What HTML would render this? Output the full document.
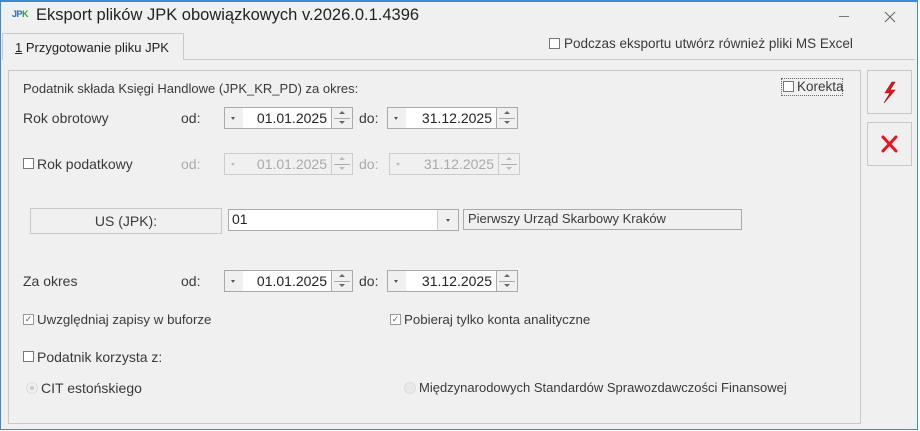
<!DOCTYPE html>
<html><head><style>
*{box-sizing:border-box;margin:0;padding:0}
body{width:920px;height:431px;background:#fff;position:relative;overflow:hidden;font-family:"Liberation Sans",Tahoma,sans-serif;font-size:13px;color:#3a3a3a}
.a{position:absolute}
.win{left:0;top:0;width:918px;height:430px;background:#f0f0f0;border:1px solid #3a8ad6;border-top:2px solid #3a8ad6}
.t{white-space:nowrap}
.cb{position:absolute;width:11px;height:11px;border:1px solid #777;background:#fff}
.dd{position:absolute;height:22px;border:1px solid #aaa;background:#f0f0f0}
.inp{position:absolute;height:22px;background:#fff;border-top:1px solid #aaa;border-bottom:1px solid #aaa;text-align:right;padding-right:4px;line-height:20px;font-size:14px;color:#222}
.dis{color:#aaa}
.dis .inp{background:#f0f0f0;color:#aaa;border-color:#ccc}
.dis .dd{border-color:#ccc}
.tri{position:absolute;left:6px;top:9px;width:0;height:0;border-left:2.5px solid transparent;border-right:2.5px solid transparent;border-top:3px solid #555}
.sp{position:absolute;width:22px;height:22px;border:1px solid #aaa;background:#f0f0f0}
.sp:before{content:"";position:absolute;left:7px;top:3px;border-left:3px solid transparent;border-right:3px solid transparent;border-bottom:3px solid #666}
.sp:after{content:"";position:absolute;left:7px;top:13px;border-left:3px solid transparent;border-right:3px solid transparent;border-top:3px solid #666}
.sp i{position:absolute;left:2px;right:2px;top:10px;border-top:1px solid #aaa}
.dis .sp{border-color:#ccc}
.dis .sp:before{border-bottom-color:#bbb}.dis .sp:after{border-top-color:#bbb}
.btn{position:absolute;border:1px solid #c8c8c8;background:#f0f0f0}
</style></head><body>
<div class="a win"></div>
<div class="a t" style="left:12px;top:9px;font-size:9px;font-weight:bold;color:#2a6db5;letter-spacing:-0.5px">JP<span style="color:#3a9a3a">K</span></div>
<div class="a t" style="left:36px;top:6px;font-size:16.5px;color:#222">Eksport plików JPK obowiązkowych v.2026.0.1.4396</div>
<div class="a" style="left:839px;top:16px;width:10px;border-top:1px solid #777"></div>
<svg class="a" style="left:884px;top:11px" width="12" height="12"><path d="M1 1L11 11M11 1L1 11" stroke="#666" stroke-width="1.1"/></svg>
<!-- tab -->
<div class="a" style="left:2px;top:59px;width:913px;border-top:1px solid #c8c8c8"></div>
<div class="a" style="left:2px;top:33px;width:182px;height:27px;border:1px solid #c8c8c8;border-bottom:none;background:#f0f0f0"></div>
<div class="a t" style="left:15px;top:40px;color:#222"><u>1</u> Przygotowanie pliku JPK</div>
<div class="cb" style="left:549px;top:38px"></div>
<div class="a t" style="left:564px;top:36px;font-size:13.5px">Podczas eksportu utwórz również pliki MS Excel</div>
<!-- panel -->
<div class="a" style="left:8px;top:70px;width:853px;height:354px;border:1px solid #c8c8c8"></div>
<div class="a t" style="left:23px;top:81px">Podatnik składa Księgi Handlowe (JPK_KR_PD) za okres:</div>
<div class="a" style="left:781px;top:78px;width:62px;height:18px;border:1px dotted #666"></div>
<div class="cb" style="left:783px;top:81px"></div>
<div class="a t" style="left:797px;top:79px;font-size:13.5px">Korekta</div>
<!-- rows -->
<div class="a t" style="left:23px;top:110px;font-size:14px">Rok obrotowy</div>
<div class="a t" style="left:181px;top:110px;font-size:14px">od:</div>
<div class="dd" style="left:224px;top:107px;width:20px"><span class="tri"></span></div>
<div class="inp" style="left:243px;top:107px;width:88px">01.01.2025</div>
<div class="sp" style="left:331px;top:107px"><i></i></div>
<div class="a t" style="left:359px;top:110px;font-size:14px">do:</div>
<div class="dd" style="left:387px;top:107px;width:20px"><span class="tri"></span></div>
<div class="inp" style="left:406px;top:107px;width:90px">31.12.2025</div>
<div class="sp" style="left:496px;top:107px"><i></i></div>

<div class="cb" style="left:23px;top:158px"></div>
<div class="a t" style="left:37px;top:156px;font-size:14px">Rok podatkowy</div>
<div class="dis">
<div class="a t" style="left:181px;top:156px;font-size:14px">od:</div>
<div class="dd" style="left:224px;top:153px;width:20px"><span class="tri" style="border-top-color:#bbb"></span></div>
<div class="inp" style="left:243px;top:153px;width:88px">01.01.2025</div>
<div class="sp" style="left:331px;top:153px"><i></i></div>
<div class="a t" style="left:359px;top:156px;font-size:14px">do:</div>
<div class="dd" style="left:389px;top:153px;width:20px"><span class="tri" style="border-top-color:#bbb"></span></div>
<div class="inp" style="left:408px;top:153px;width:90px">31.12.2025</div>
<div class="sp" style="left:498px;top:153px"><i></i></div>
</div>

<div class="btn" style="left:30px;top:208px;width:192px;height:26px;text-align:center;line-height:24px;font-size:14px">US (JPK):</div>
<div class="a" style="left:228px;top:209px;width:231px;height:22px;border:1px solid #aaa;background:#fff"></div>
<div class="a t" style="left:232px;top:211px;font-size:14px;color:#222">01</div>
<div class="a" style="left:437px;top:210px;width:21px;height:20px;border-left:1px solid #ccc;background:#f0f0f0"><span class="tri" style="left:8px"></span></div>
<div class="a" style="left:463px;top:209px;width:279px;height:21px;border:1px solid #aaa;background:#f0f0f0"></div>
<div class="a t" style="left:468px;top:211px">Pierwszy Urząd Skarbowy Kraków</div>

<div class="a t" style="left:23px;top:273px;font-size:14px">Za okres</div>
<div class="a t" style="left:181px;top:273px;font-size:14px">od:</div>
<div class="dd" style="left:224px;top:270px;width:20px"><span class="tri"></span></div>
<div class="inp" style="left:243px;top:270px;width:88px">01.01.2025</div>
<div class="sp" style="left:331px;top:270px"><i></i></div>
<div class="a t" style="left:359px;top:273px;font-size:14px">do:</div>
<div class="dd" style="left:387px;top:270px;width:20px"><span class="tri"></span></div>
<div class="inp" style="left:406px;top:270px;width:90px">31.12.2025</div>
<div class="sp" style="left:496px;top:270px"><i></i></div>

<div class="cb" style="left:23px;top:314px;border-color:#999;font-size:9px;line-height:9px;color:#666;text-align:center">✓</div>
<div class="a t" style="left:37px;top:312px;font-size:13.3px">Uwzględniaj zapisy w buforze</div>
<div class="cb" style="left:390px;top:314px;border-color:#999;font-size:9px;line-height:9px;color:#666;text-align:center">✓</div>
<div class="a t" style="left:404px;top:312px;font-size:13.3px">Pobieraj tylko konta analityczne</div>

<div class="cb" style="left:23px;top:351px"></div>
<div class="a t" style="left:37px;top:349px;font-size:14px">Podatnik korzysta z:</div>

<div class="a" style="left:26px;top:382px;width:12px;height:12px;border-radius:50%;border:1px solid #ddd;background:#eee"><div class="a" style="left:3px;top:3px;width:4px;height:4px;border-radius:50%;background:#ccc"></div></div>
<div class="a t" style="left:41px;top:380px;font-size:14px">CIT estoński­ego</div>
<div class="a" style="left:404px;top:382px;width:12px;height:12px;border-radius:50%;border:1px solid #ddd;background:#e8e8e8"></div>
<div class="a t" style="left:419px;top:380px">Międzynarodowych Standardów Sprawozdawczości Finansowej</div>

<!-- side buttons -->
<div class="btn" style="left:867px;top:70px;width:45px;height:44px">
<svg width="45" height="44" style="position:absolute;left:-1px;top:-1px"><path d="M25 12 L18 23 L23 23 L17 33 L28 20 L23 20 L28 12 Z" fill="#e8141c" stroke="#a00" stroke-width="0.6"/></svg>
</div>
<div class="btn" style="left:867px;top:122px;width:45px;height:44px">
<svg width="45" height="44" style="position:absolute;left:-1px;top:-1px"><path d="M16 15 L29 29 M29 15 L16 29" stroke="#e8141c" stroke-width="3" stroke-linecap="round"/></svg>
</div>
</body></html>
